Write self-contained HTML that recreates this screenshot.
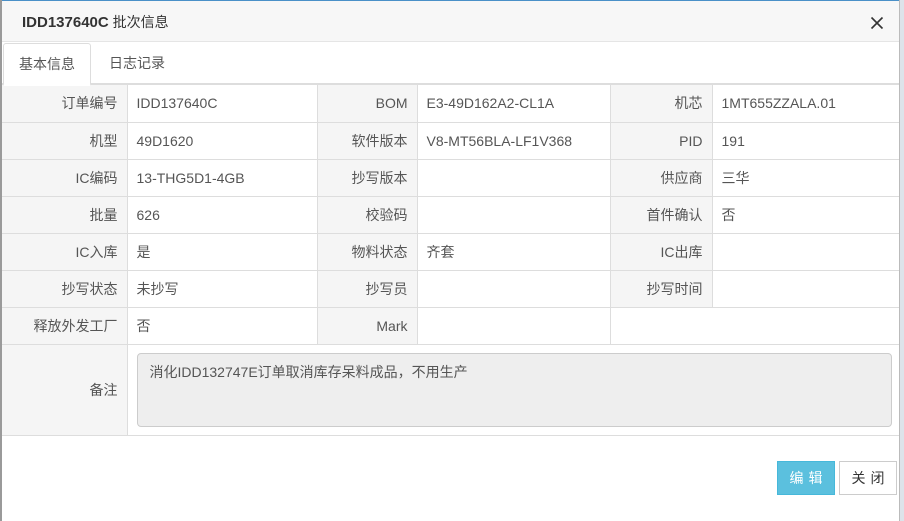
<!DOCTYPE html>
<html><head><meta charset="utf-8"><style>
*{margin:0;padding:0;box-sizing:border-box}
body{width:904px;height:521px;background:#fff;font-family:"Liberation Sans","Noto Sans CJK SC",sans-serif;font-size:14px;color:#555;position:relative;overflow:hidden}
.lb{position:absolute;left:0;top:0;width:2px;height:521px;background:#9a9a9a}
.rb{position:absolute;left:900px;top:0;width:4px;height:521px;background:#dde3ea}
.rb2{position:absolute;left:899px;top:0;width:1px;height:521px;background:#bbb}
.tb{position:absolute;left:0;top:0;width:904px;height:1px;background:#4a90c8}
.dlg{position:absolute;left:2px;top:1px;width:897px;height:520px;background:#fff}
.hd{height:41px;background:#f7f7f7;border-bottom:1px solid #e5e5e5;padding:11px 0 0 20px;font-size:14px;color:#333}
.hd b{font-size:15px;color:#333}
.x{position:absolute;left:870px;top:16px}
.tabs{height:43px;position:relative;border-bottom:2px solid #ddd}
.tab{position:absolute;top:1px;height:42px;line-height:40px;padding:0 15px;font-size:14px;color:#555}
.t1{left:1px;border:1px solid #ddd;border-bottom:2px solid #fff;border-radius:3px 3px 0 0;background:#fff;height:43px}
.t2{left:92px}
table{border-collapse:collapse;width:897px;table-layout:fixed}
td{border:1px solid #ddd;height:37px;padding:0 9px;white-space:nowrap}
td.l{background:#f5f5f5;text-align:right;color:#555}
tr:first-child td{border-top:none}
td:first-child{border-left:none}
td:last-child{border-right:none}
.ta{margin:8px 0;height:74px;border:1px solid #ccc;border-radius:4px;background:#eee;padding:8px 12px;color:#555;position:relative;margin-right:-2px}
.btn{position:absolute;top:461px;height:34px;line-height:32px;font-size:14px;text-align:center;letter-spacing:5px;padding-left:5px}
.b1{left:777px;width:58px;background:#5bc0de;border:1px solid #46b8da;color:#fff}
.b2{left:839px;width:58px;border:1px solid #ccc;color:#333;background:#fff}
</style></head><body>
<div class="tb"></div><div class="lb"></div><div class="rb"></div><div class="rb2"></div>
<div class="dlg">
<div class="hd"><b>IDD137640C</b> 批次信息</div>
<div class="tabs"><div class="tab t1">基本信息</div><div class="tab t2">日志记录</div></div>
<table>
<colgroup><col style="width:125px"><col style="width:190px"><col style="width:100px"><col style="width:193px"><col style="width:102px"><col style="width:187px"></colgroup>
<tr><td class="l">订单编号</td><td>IDD137640C</td><td class="l">BOM</td><td>E3-49D162A2-CL1A</td><td class="l">机芯</td><td>1MT655ZZALA.01</td></tr>
<tr><td class="l">机型</td><td>49D1620</td><td class="l">软件版本</td><td>V8-MT56BLA-LF1V368</td><td class="l">PID</td><td>191</td></tr>
<tr><td class="l">IC编码</td><td>13-THG5D1-4GB</td><td class="l">抄写版本</td><td></td><td class="l">供应商</td><td>三华</td></tr>
<tr><td class="l">批量</td><td>626</td><td class="l">校验码</td><td></td><td class="l">首件确认</td><td>否</td></tr>
<tr><td class="l">IC入库</td><td>是</td><td class="l">物料状态</td><td>齐套</td><td class="l">IC出库</td><td></td></tr>
<tr><td class="l">抄写状态</td><td>未抄写</td><td class="l">抄写员</td><td></td><td class="l">抄写时间</td><td></td></tr>
<tr><td class="l">释放外发工厂</td><td>否</td><td class="l">Mark</td><td></td><td colspan="2"></td></tr>
<tr><td class="l" style="height:91px">备注</td><td colspan="5"><div class="ta">消化IDD132747E订单取消库存呆料成品，不用生产</div></td></tr>
</table>
</div>
<svg class="x" width="14" height="14" viewBox="0 0 14 14"><path d="M1.5 1.5L12.5 12.5M12.5 1.5L1.5 12.5" stroke="#333" stroke-width="1.6"/></svg>
<div class="btn b1">编辑</div><div class="btn b2">关闭</div>
</body></html>
